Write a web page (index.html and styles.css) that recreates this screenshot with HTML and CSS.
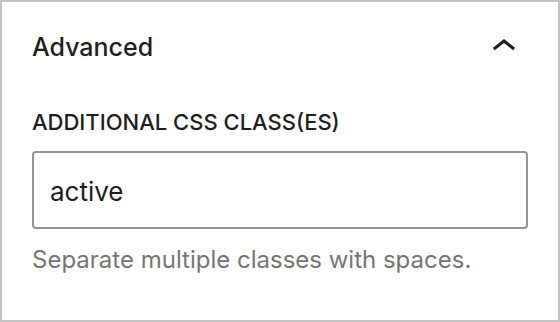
FILE: index.html
```html
<!DOCTYPE html>
<html>
  <head>
    <title>Advanced</title>
    <link rel="stylesheet" href="styles.css">
  </head>
  <body>
    <section class="panel">
      <div class="panel-header">
        <h2>Advanced</h2>
        <svg viewBox="0 0 24 24" class="chevron">
          <path d="M6.5 12.4L12 8l5.5 4.4-.9 1.2L12 10l-4.6 3.6-1-1.2z" />
        </svg>
      </div>
      <div class="panel-body">
        <label for="className">Additional CSS class(es)</label>
        <input type="text" id="className" value="active" />
        <p class="help">Separate multiple classes with spaces.</p>
      </div>
    </section>
  </body>
</html>
```

FILE: styles.css
```css
*,
*::after,
*::before {
  margin: 0;
  padding: 0;
  box-sizing: inherit;
}

html {
  box-sizing: border-box;
}

body {
  margin: 0;
  width: 560px;
  height: 322px;
  background-color: white;
  font-family: Inter, "Noto Sans", sans-serif;
  color: #1e1e1e;
}

.panel {
  height: 100%;
  border: 2px solid #c2c2c2;
  padding: 0 30px;
}

.panel-header {
  display: flex;
  justify-content: space-between;
  align-items: center;
  padding-top: 21px;
}

h2 {
  font-size: 25px;
  font-weight: 500;
}

.chevron {
  width: 48px;
  height: 48px;
  fill: #1e1e1e;
}

.panel-body {
  display: flex;
  flex-direction: column;
  padding-top: 35px;
}

label {
  font-size: 22px;
  font-weight: 500;
  text-transform: uppercase;
  line-height: 32px;
  margin-bottom: 13px;
}

input {
  height: 78px;
  border: 2px solid #949494;
  border-radius: 4px;
  padding: 2px 16px 0;
  font-family: inherit;
  font-size: 26px;
  color: #1e1e1e;
}

.help {
  margin-top: 14px;
  font-size: 24px;
  line-height: 34px;
  color: #757575;
}
```
